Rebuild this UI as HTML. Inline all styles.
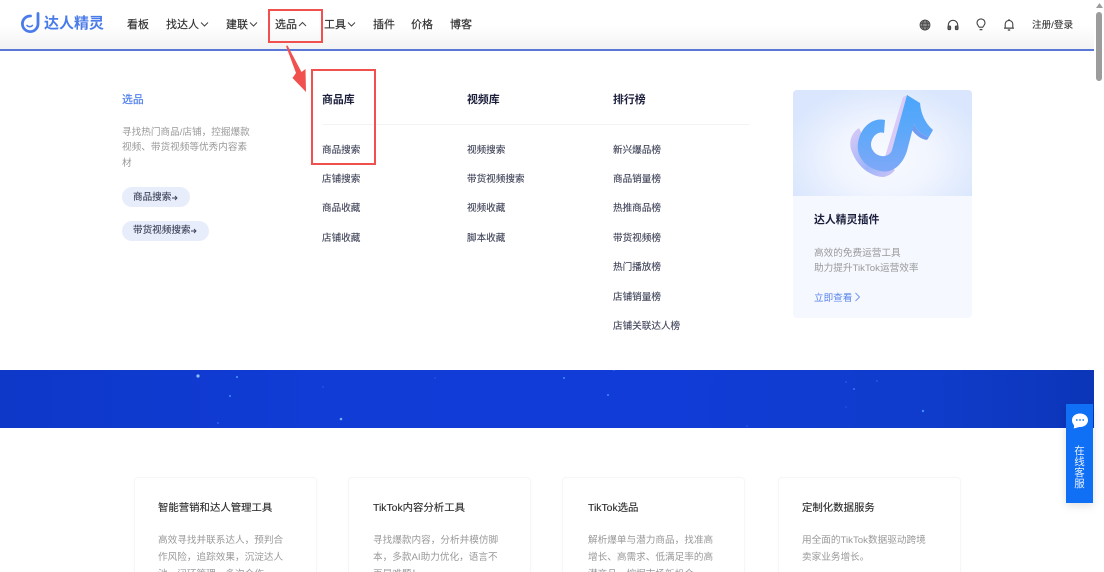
<!DOCTYPE html>
<html lang="zh"><head><meta charset="utf-8"><title>达人精灵</title>
<style>
html,body{margin:0;padding:0;width:1104px;height:572px;overflow:hidden;background:#fff}
body{font-family:"Liberation Sans","Noto Sans CJK SC",sans-serif;position:relative}
#w{position:absolute;left:0;top:0;width:1104px;height:572px;overflow:hidden;filter:blur(.35px)}
.t{position:absolute;white-space:nowrap;line-height:16px;height:16px}
.n{font-size:11px;color:#2e2e2e;top:17px;-webkit-text-stroke:.15px #2e2e2e}
.h{font-size:10.9px;color:#1b1f3b;font-weight:700;top:92px}
.m{font-size:9.6px;color:#3f4358;-webkit-text-stroke:.12px #3f4358}
.d{font-size:9.65px;color:#999}
.c{position:absolute;top:477px;height:110px;background:#fff;border:1px solid #f6f6f6;border-radius:4px;box-sizing:border-box;box-shadow:0 1px 4px rgba(0,0,0,.02)}
.ct{font-size:10.4px;color:#2b2b2b;top:501px;-webkit-text-stroke:.12px #2b2b2b}
.p{position:absolute;left:122px;background:#e8edfb;border-radius:10px;height:20px}
</style></head><body><div id="w">

<div style="position:absolute;left:0;top:0;width:1094px;height:50px;background:linear-gradient(#fff 0,#fff 50%,#f2f2f2 100%)"></div>
<div style="position:absolute;left:0;top:49px;width:1094px;height:2px;background:#5a78d8"></div>

<svg style="position:absolute;left:20px;top:12px" width="20" height="22" viewBox="0 0 20 22" fill="none">
<path d="M18 1.500V11.500A7.800 7.800 0 1 1 10.500 4" stroke="#4a7bea" stroke-width="2.800" stroke-linecap="round"/>
<path d="M7 13.500c1.400 1.600 4 1.600 5.400 0" stroke="#4a7bea" stroke-width="1.600" stroke-linecap="round"/></svg>
<div class="t" style="left:44px;top:16px;font-size:15px;font-weight:700;color:#4a7bea">达人精灵</div>

<div class="t n" style="left:127px">看板</div>
<div class="t n" style="left:166px">找达人</div>
<svg style="position:absolute;left:200px;top:21px" width="9" height="7" fill="none"><path d="M1 1.500 4.500 5 8 1.500" stroke="#444" stroke-width="1"/></svg>
<div class="t n" style="left:226px">建联</div>
<svg style="position:absolute;left:249px;top:21px" width="9" height="7" fill="none"><path d="M1 1.500 4.500 5 8 1.500" stroke="#444" stroke-width="1"/></svg>
<div class="t n" style="left:275px">选品</div>
<svg style="position:absolute;left:298px;top:21px" width="9" height="7" fill="none"><path d="M1 5 4.500 1.500 8 5" stroke="#444" stroke-width="1"/></svg>
<div class="t n" style="left:324px">工具</div>
<svg style="position:absolute;left:347px;top:21px" width="9" height="7" fill="none"><path d="M1 1.500 4.500 5 8 1.500" stroke="#444" stroke-width="1"/></svg>
<div class="t n" style="left:373px">插件</div>
<div class="t n" style="left:411px">价格</div>
<div class="t n" style="left:450px">博客</div>

<svg style="position:absolute;left:919px;top:19px" width="12" height="12" viewBox="0 0 12 12" fill="#8a8a8a" stroke="#444" stroke-width=".8"><circle cx="6" cy="6" r="5"/><ellipse cx="6" cy="6" rx="2.300" ry="5" fill="none"/><path d="M1 4.200h10M1 7.800h10" fill="none"/></svg>
<svg style="position:absolute;left:947px;top:19px" width="12" height="12" viewBox="0 0 12 12" fill="none" stroke="#444" stroke-width="1.100"><path d="M1.300 8V6a4.700 4.700 0 0 1 9.400 0v2"/><rect x="1" y="7" width="2.600" height="3.600" rx="1" fill="#666"/><rect x="8.400" y="7" width="2.600" height="3.600" rx="1" fill="#666"/></svg>
<svg style="position:absolute;left:975px;top:18px" width="12" height="14" viewBox="0 0 12 14" fill="none" stroke="#444" stroke-width="1.100"><path d="M4.200 9.200C3.600 7.800 2 7 2 4.900a4 4 0 0 1 8 0c0 2.100-1.600 2.900-2.200 4.300z"/><path d="M4.600 11.600h2.800" stroke-width="1.300"/></svg>
<svg style="position:absolute;left:1003px;top:18px" width="12" height="14" viewBox="0 0 12 14" fill="none" stroke="#444" stroke-width="1.100"><path d="M2.200 10V6.200a3.800 3.800 0 0 1 7.600 0V10z"/><path d="M1 10.200h10M6 1v1.400"/><path d="M4.800 12h2.400" stroke-width="1.300"/></svg>
<div class="t" style="left:1032px;top:17px;line-height:17px;font-size:9.6px;color:#333;-webkit-text-stroke:.1px #333">注册/登录</div>

<div style="position:absolute;left:1094px;top:0;width:10px;height:572px;background:#fff"></div>
<div style="position:absolute;left:1096px;top:12px;width:6px;height:69px;border-radius:3px;background:#9c9c9c"></div>
<svg style="position:absolute;left:1096px;top:3px" width="7" height="5"><path d="M3.500 0 7 5H0z" fill="#9c9c9c"/></svg>

<!-- left column -->
<div class="t" style="left:122px;top:92px;font-size:10.9px;color:#4a7bea;-webkit-text-stroke:.15px #4a7bea">选品</div>
<div class="t d" style="left:122px;top:125px">寻找热门商品/店铺，控掘爆款</div>
<div class="t d" style="left:122px;top:140px">视频、带货视频等优秀内容素</div>
<div class="t d" style="left:122px;top:156px">材</div>
<div class="p" style="top:187px;width:68px"></div>
<div class="t m" style="left:133px;top:189.500px;color:#3d4259">商品搜索</div>
<svg style="position:absolute;left:172px;top:194.500px" width="6" height="6" fill="none" stroke="#3d4259" stroke-width=".9"><path d="M0 3h5M3 1l2 2-2 2"/></svg>
<div class="p" style="top:221px;width:87px"></div>
<div class="t m" style="left:133px;top:223px;color:#3d4259">带货视频搜索</div>
<svg style="position:absolute;left:191px;top:228px" width="6" height="6" fill="none" stroke="#3d4259" stroke-width=".9"><path d="M0 3h5M3 1l2 2-2 2"/></svg>

<!-- columns -->
<div class="t h" style="left:322px">商品库</div>
<div class="t h" style="left:467px">视频库</div>
<div class="t h" style="left:613px">排行榜</div>
<div style="position:absolute;left:322px;top:124px;width:428px;height:1px;background:#f3f3f3"></div>

<div class="t m" style="left:322px;top:143px">商品搜索</div>
<div class="t m" style="left:322px;top:172px">店铺搜索</div>
<div class="t m" style="left:322px;top:201px">商品收藏</div>
<div class="t m" style="left:322px;top:231px">店铺收藏</div>

<div class="t m" style="left:467px;top:143px">视频搜索</div>
<div class="t m" style="left:467px;top:172px">带货视频搜索</div>
<div class="t m" style="left:467px;top:201px">视频收藏</div>
<div class="t m" style="left:467px;top:231px">脚本收藏</div>

<div class="t m" style="left:613px;top:143px">新兴爆品榜</div>
<div class="t m" style="left:613px;top:172px">商品销量榜</div>
<div class="t m" style="left:613px;top:201px">热推商品榜</div>
<div class="t m" style="left:613px;top:231px">带货视频榜</div>
<div class="t m" style="left:613px;top:260px">热门播放榜</div>
<div class="t m" style="left:613px;top:290px">店铺销量榜</div>
<div class="t m" style="left:613px;top:319px">店铺关联达人榜</div>

<!-- plugin card -->
<div style="position:absolute;left:793px;top:90px;width:179px;height:228px;background:#f5f8ff;border-radius:4px"></div>
<div style="position:absolute;left:793px;top:90px;width:179px;height:106px;border-radius:4px 4px 0 0;background:radial-gradient(ellipse 105px 75px at 92px 68px,#f8faff 0,#f1f5fe 45%,#d9e6fd 100%)"></div>
<svg style="position:absolute;left:0;top:0" width="1104" height="572">
<defs>
<linearGradient id="g" x1="0" y1="0" x2="0" y2="1"><stop offset="0" stop-color="#4aa6fb"/><stop offset=".5" stop-color="#5fa8f9"/><stop offset="1" stop-color="#7fa8f8"/></linearGradient>
<linearGradient id="s" x1="0" y1="0" x2="1" y2="1"><stop offset="0" stop-color="#dccbf6"/><stop offset=".6" stop-color="#9db4f8"/><stop offset="1" stop-color="#d0c4f6"/></linearGradient>
</defs>
<path d="M859 128C851 133 848 143 852 152C858 168 872 177 884 177C888 176 892 174 895 170L880 160L865 140Z" fill="url(#s)"/>
<path d="M903 97 908 95 893 152 885 157Z" fill="#d8cbf7"/>
<path d="M914 124C917 131 922 135 929 137L927 140C920 139 915 134 912 130Z" fill="#6f9bf0"/>
<path d="M907 95L920 103C921 115 926 124 933 130L929 137C922 135 917 131 914 124L908 147C904 165 892 174 880 171C866 168 856 157 858 143C860 128 872 117 885 120L884 133C878 131 872 136 871 144C871 152 878 157 885 156C889 155 891 153 892 150Z" fill="url(#g)"/>
</svg>
<div class="t" style="left:814px;top:212px;font-size:10.9px;font-weight:700;color:#1b1f3b">达人精灵插件</div>
<div class="t d" style="left:814px;top:246px">高效的免费运营工具</div>
<div class="t d" style="left:814px;top:261px">助力提升TikTok运营效率</div>
<div class="t" style="left:814px;top:291px;font-size:9.6px;color:#5b84ec">立即查看</div>
<svg style="position:absolute;left:854px;top:292px" width="7" height="10" fill="none"><path d="M1.500 1 5.500 5 1.500 9" stroke="#6f93ee" stroke-width=".9"/></svg>

<!-- banner -->
<div style="position:absolute;left:0;top:370px;width:1094px;height:58px;background:linear-gradient(90deg,#0d38c8 0,#113cd6 30%,#113cd8 60%,#0f3ccb 85%,#0c35b8 100%)"></div>
<svg style="position:absolute;left:0;top:370px" width="1094" height="58" fill="#3f8dff">
<circle cx="198" cy="6" r="1.600" fill="#8cc0ff"/><circle cx="237" cy="7" r="1.100"/><circle cx="230" cy="26" r="1"/><circle cx="341" cy="49" r="1.300" fill="#6fb0ff"/><circle cx="218" cy="53" r=".7"/><circle cx="323" cy="17" r=".7" opacity=".6"/><circle cx="435" cy="8" r=".6" opacity=".6"/><circle cx="564" cy="8" r="1"/><circle cx="608" cy="25" r="1"/><circle cx="854" cy="19" r="1" opacity=".8"/><circle cx="846" cy="12" r=".7" opacity=".6"/><circle cx="923" cy="41" r="1.200"/><circle cx="846" cy="37" r=".6" opacity=".6"/><circle cx="747" cy="56" r=".6" opacity=".7"/><circle cx="614" cy="0" r=".7"/><circle cx="877" cy="11" r=".8" opacity=".6"/>
</svg>

<!-- feature cards -->
<div class="c" style="left:134px;width:183px"></div>
<div class="c" style="left:348px;width:183px"></div>
<div class="c" style="left:562px;width:183px"></div>
<div class="c" style="left:778px;width:183px"></div>
<div class="t ct" style="left:158px">智能营销和达人管理工具</div>
<div class="t d" style="left:158px;top:533px">高效寻找并联系达人，预判合</div>
<div class="t d" style="left:158px;top:550px">作风险，追踪效果，沉淀达人</div>
<div class="t d" style="left:158px;top:567px">池，闭环管理，多次合作</div>
<div class="t ct" style="left:373px">TikTok内容分析工具</div>
<div class="t d" style="left:373px;top:533px">寻找爆款内容，分析并模仿脚</div>
<div class="t d" style="left:373px;top:550px">本，多款AI助力优化，语言不</div>
<div class="t d" style="left:373px;top:567px">再是难题！</div>
<div class="t ct" style="left:588px">TikTok选品</div>
<div class="t d" style="left:588px;top:533px">解析爆单与潜力商品，找准高</div>
<div class="t d" style="left:588px;top:550px">增长、高需求、低满足率的高</div>
<div class="t d" style="left:588px;top:567px">潜商品，挖掘市场新机会</div>
<div class="t ct" style="left:802px">定制化数据服务</div>
<div class="t d" style="left:802px;top:533px">用全面的TikTok数据驱动跨境</div>
<div class="t d" style="left:802px;top:550px">卖家业务增长。</div>

<!-- float widget -->
<div style="position:absolute;left:1066px;top:404px;width:27px;height:99px;background:#0f6ff5;box-shadow:0 3px 8px rgba(0,0,0,.12)"></div>
<svg style="position:absolute;left:1071px;top:413px" width="18" height="16"><path d="M9 .5C13.600 .5 17 3.400 17 7.200S13.600 14 9 14C7 14 4 15.600 2.600 15.200 3.400 14 3.200 12.600 2.400 11.400 1.500 10.200 1 8.700 1 7.200 1 3.400 4.400 .5 9 .5Z" fill="#fff"/><circle cx="5.800" cy="7" r=".9" fill="#0f6ff5"/><circle cx="9" cy="7" r=".9" fill="#0f6ff5"/><circle cx="12.200" cy="7" r=".9" fill="#0f6ff5"/></svg>
<div style="position:absolute;left:1066px;top:446px;width:27px;text-align:center;font-size:10.5px;line-height:11px;color:#e8f1ff"><div style="height:11px">在</div><div style="height:11px">线</div><div style="height:11px">客</div><div style="height:11px">服</div></div>

<!-- red annotations -->
<div style="position:absolute;left:267.500px;top:8.500px;width:55.500px;height:34px;box-sizing:border-box;border:2.500px solid #f0514f"></div>
<div style="position:absolute;left:310.500px;top:68.500px;width:65px;height:96px;box-sizing:border-box;border:2.500px solid #f0514f"></div>
<svg style="position:absolute;left:0;top:0" width="1104" height="572"><path d="M286 46 296 73 292.500 78 306 92 305.500 69 301.500 72 287.500 45.500Z" fill="#f0514f"/></svg>

</div></body></html>
